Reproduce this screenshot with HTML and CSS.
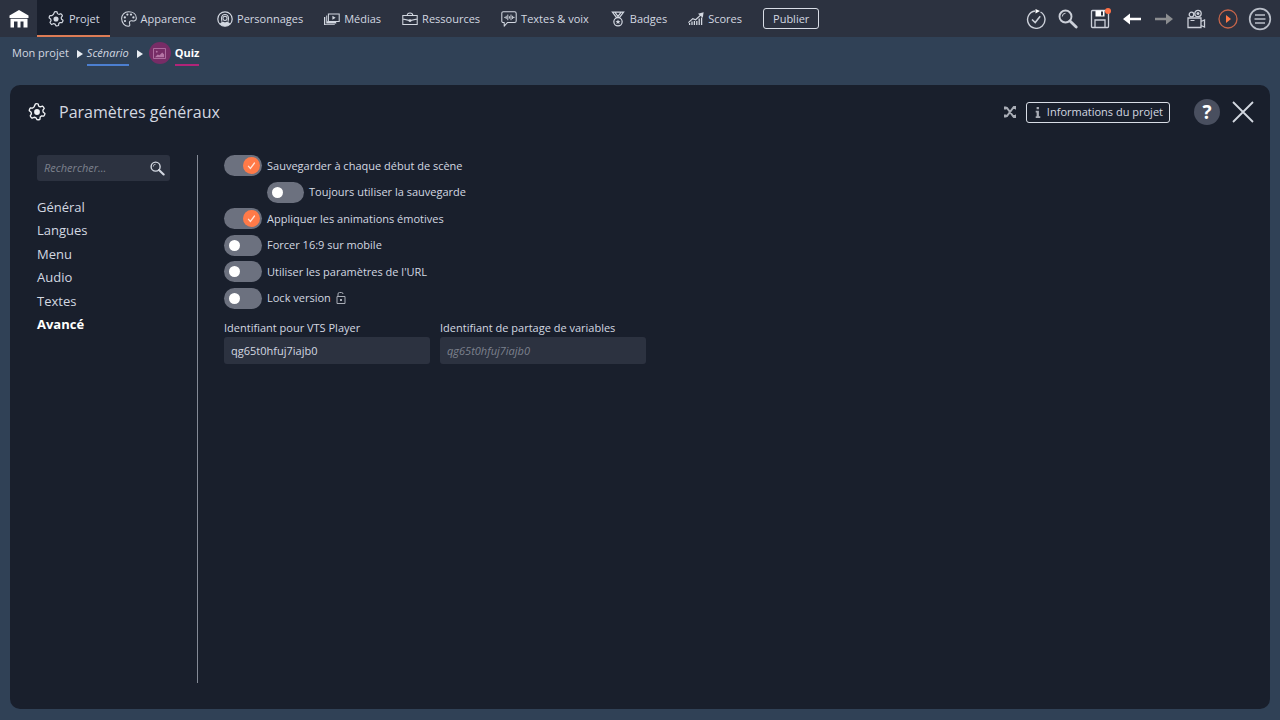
FILE: index.html
```html
<!DOCTYPE html>
<html lang="fr">
<head>
<meta charset="utf-8">
<title>Paramètres généraux</title>
<link rel="stylesheet" href="styles.css">
</head>
<body>
<svg class="defs" aria-hidden="true">
  <symbol id="gear" viewBox="0 0 20 20">
    <path fill="none" stroke="currentColor" stroke-width="1.5" stroke-linejoin="round" d="M8.300 1q1.700-.5 3 .1l.5 2.200q1 .8 2 .9l2.200-.8q1.500 1 2 2.600l-1.400 2q-.1 1.200.4 2.200l1.800 1.400q-.1 1.800-1.300 3l-2.400-.2q-1 .5-1.600 1.400l-.3 2.300q-1.600.8-3.200.4l-1.200-2.100q-1-.6-2.100-.5l-2.200 1q-1.500-1-2-2.600l1.300-2.100q0-1.100-.5-2.100L1.400 8.600q0-1.700 1.200-3l2.400.1q1-.5 1.700-1.400z"/>
    <circle cx="10" cy="10" r="3.200" fill="currentColor"/>
  </symbol>
  <symbol id="lens" viewBox="0 0 20 20">
    <circle cx="7.500" cy="7.500" r="6" fill="none" stroke="currentColor" stroke-width="1.900"/>
    <path d="M4.300 7.500a3.200 3.200 0 0 1 3.200-3.200" fill="none" stroke="currentColor" stroke-width="1"/>
    <path d="M12 12l6.200 6" stroke="currentColor" stroke-width="2.800" stroke-linecap="round"/>
  </symbol>
</svg>
<header class="topbar">
  <a class="home" href="#" aria-label="Accueil"><svg class="icon-lg" viewBox="0 0 20 20"><path fill="#fff" d="M10 1L19.500 6.500V9H.5V6.500zM1.500 9.700h17V18.500h-4V12.500H11.500v6H8.500v-6H5v6H1.500z"/></svg></a>
  <nav class="menu">
    <a class="item active" href="#"><svg class="icon"><use href="#gear"/></svg>Projet</a>
    <a class="item" href="#"><svg class="icon" viewBox="0 0 20 20"><path fill="none" stroke="currentColor" stroke-width="1.300" d="M9.500 1C4 1 .8 5 .8 9.500c0 5.500 4 9.500 8.200 9.500 3.500 0 1.500-3 1.500-4.500s1.500-2.500 3-2.200c2 .4 5.700.5 5.700-3.300C19.200 4 15 1 9.500 1z"/><g fill="currentColor"><circle cx="4.800" cy="8" r="1.400"/><circle cx="8" cy="4.500" r="1.400"/><circle cx="12.500" cy="4.500" r="1.400"/><circle cx="15.500" cy="8" r="1.400"/><circle cx="5" cy="12.500" r="1.400"/></g></svg>Apparence</a>
    <a class="item" href="#"><svg class="icon" viewBox="0 0 20 20"><g fill="none" stroke="currentColor"><circle cx="10" cy="10" r="9" stroke-width="1.500"/><path stroke-width="1.300" d="M6.300 13.500C5 10 5 4.500 10 4.500s5 5.500 3.700 9"/><circle cx="10" cy="9.200" r="2.600" stroke-width="1.300"/></g><path fill="currentColor" d="M3.500 16c1-2 3-2.500 4.500-2.700q2 1.500 4 0c1.500.2 3.500.7 4.500 2.700-3.500 4-9.500 4-13 0z"/></svg>Personnages</a>
    <a class="item" href="#"><svg class="icon" viewBox="0 0 20 20"><path fill="none" stroke="currentColor" stroke-width="1.300" d="M5.500 3.700H19v9.500H5.500z"/><path fill="currentColor" d="M2.800 5.500H4v9h11.500v1.200H2.800zM0 7.500h1.600v9H13.500V17.500H0zM4 12.800h11v2.700H4zM10.500 6l4 2.500-4 2.500z"/></svg>Médias</a>
    <a class="item" href="#"><svg class="icon" viewBox="0 0 20 20"><path fill="none" stroke="currentColor" stroke-width="1.300" d="M1 5.500h18v11.500H1zM6.500 5.500q0-3 3.500-3t3.500 3M1 10l9 2 9-2"/><path fill="currentColor" d="M8.500 10.500h3v3h-3z"/></svg>Ressources</a>
    <a class="item" href="#"><svg class="icon" viewBox="0 0 20 20"><path fill="none" stroke="currentColor" stroke-width="1.300" stroke-linejoin="round" d="M3 1h14q2 0 2 2v9.500q0 2-2 2H8l-4 4.500v-4.500H3q-2 0-2-2V3q0-2 2-2z"/><path stroke="currentColor" stroke-width="1.200" d="M4 8h2M6.500 6v4M8.500 4.500v7M10.500 6.500v3M12.500 4.500v7M14.500 6v4M15 8h2"/></svg>Textes &amp; voix</a>
    <a class="item" href="#"><svg class="icon" viewBox="0 0 20 20"><g fill="none" stroke="currentColor" stroke-width="1.500"><path d="M3 1.500h14l-5 6.500H8zM6 1.500l5 6.500M14 1.500L9 8"/><circle cx="10" cy="13.500" r="5.200"/></g><path fill="currentColor" d="M10 10.500l.9 2 2.200.2-1.700 1.400.6 2.100-2-1.200-2 1.200.6-2.100-1.700-1.400 2.200-.2z"/></svg>Badges</a>
    <a class="item" href="#"><svg class="icon" viewBox="0 0 20 20"><path fill="none" stroke="currentColor" stroke-width="1.500" d="M.5 14.500L6 9.500l3.500 1.500 7-6.500"/><path fill="currentColor" d="M12.500 3.500L19.500 1.500l-1 7z"/><path stroke="currentColor" stroke-width="1.600" d="M2 17.500V15M5 17.500V13M8 17.500V12.500M11 17.500V12.500M14 17.500V9.500M17 17.500V8"/></svg>Scores</a>
  </nav>
  <button class="outline publish" type="button">Publier</button>
  <div class="tools">
    <button type="button" aria-label="Vérifier"><svg class="icon-lg" viewBox="0 0 20 20"><g fill="none" stroke="currentColor"><path stroke-width="1.400" d="M14.500 3A8.700 8.700 0 1 1 9 2"/><path stroke-width="1.600" d="M6 10.500l3.200 3 5-6.200"/></g><path fill="#fff" d="M9.500 0l4.500 2-4.500 2.500z"/></svg></button>
    <button type="button" aria-label="Rechercher"><svg class="icon-lg"><use href="#lens"/></svg></button>
    <button class="save" type="button" aria-label="Enregistrer"><svg class="icon-lg" viewBox="0 0 20 20"><g fill="none" stroke="currentColor" stroke-width="1.300"><path d="M2.500 1.500h14L18.500 4v13.500q0 1-1 1h-15q-1 0-1-1v-15q0-1 1-1zM5 18.500v-7.500h10v7.500"/></g><path fill="#fff" d="M5.500 1.500h9v6h-9z"/><path fill="#2c3240" d="M11 2.500h2v4h-2z"/></svg><span class="dot"></span></button>
    <button class="bright" type="button" aria-label="Annuler"><svg class="icon-lg" viewBox="0 0 20 20"><path fill="currentColor" d="M1 10l7-5.500v4.200H19v2.600H8v4.200z"/></svg></button>
    <button class="dim" type="button" aria-label="Rétablir"><svg class="icon-lg" viewBox="0 0 20 20"><path fill="currentColor" d="M19 10l-7-5.500v4.200H1v2.600h11v4.200z"/></svg></button>
    <button type="button" aria-label="Caméra"><svg class="icon-lg" viewBox="0 0 20 20"><g fill="none" stroke="currentColor" stroke-width="1.300"><circle cx="5.500" cy="5.500" r="2.300"/><circle cx="12" cy="4.500" r="3.200"/><path d="M2 9h13v9.500H2zM15 12.500l3.500-1.500v7L15 16.500"/></g><circle cx="12" cy="4.500" r="1.500" fill="currentColor"/><path fill="currentColor" d="M4.500 11h4v1h-4z"/></svg></button>
    <button class="play" type="button" aria-label="Lire"><svg class="icon-lg" viewBox="0 0 20 20"><circle cx="10" cy="10" r="9" fill="none" stroke="currentColor" stroke-width="1.300"/><path fill="#ff7846" d="M8 6l5 4-5 4z"/></svg></button>
    <button type="button" aria-label="Menu"><svg class="icon-xl" viewBox="0 0 24 24"><circle cx="12" cy="12" r="10.300" fill="none" stroke="currentColor" stroke-width="1.700"/><path stroke="currentColor" stroke-width="1.500" d="M7 8h10M6.500 12h11M7 16h10"/></svg></button>
  </div>
</header>
<nav class="crumbs" aria-label="Fil d'Ariane">
  <a href="#">Mon projet</a>
  <span class="chevron"></span>
  <a class="scenario" href="#">Scénario</a>
  <span class="chevron wide"></span>
  <span class="scene"><svg viewBox="0 0 14 12"><path fill="none" stroke="currentColor" d="M.5.500h13v11H.5z"/><path fill="currentColor" d="M2 10l3-3 2 1 3-3 2 2v3z"/><circle cx="4" cy="4" r="1" fill="currentColor"/></svg></span>
  <a class="quiz" href="#">Quiz</a>
</nav>
<main class="panel">
  <header class="panel-head">
    <svg class="head-icon"><use href="#gear"/></svg>
    <h1>Paramètres généraux</h1>
    <svg class="shuffle" viewBox="0 0 12 12"><g fill="none" stroke="currentColor" stroke-width="2"><path d="M0 2h3l6 8h3M0 10h3l6-8h3"/></g><path fill="currentColor" d="M8.500 0H12v4zM8.500 12H12V8zM0 .5h2.500v3H0zM0 8.500h2.500v3H0z"/></svg>
    <button class="outline info" type="button"><svg viewBox="0 0 6 12"><path fill="currentColor" d="M1.500 0h2.500v2.500H1.500zM.5 4H4v6h1.500v2H.5v-2H1.500V6H.5z"/></svg>Informations du projet</button>
    <button class="help" type="button">?</button>
    <button class="close" type="button" aria-label="Fermer"><svg viewBox="0 0 22 22"><path stroke="currentColor" stroke-width="1.800" d="M1 1l20 20M21 1L1 21"/></svg></button>
  </header>
  <div class="content">
    <aside class="side">
      <div class="search"><input type="text" placeholder="Rechercher..." aria-label="Rechercher"><svg><use href="#lens"/></svg></div>
      <nav class="sections">
        <a href="#">Général</a><a href="#">Langues</a><a href="#">Menu</a><a href="#">Audio</a><a href="#">Textes</a><a class="current" href="#">Avancé</a>
      </nav>
    </aside>
    <form class="settings">
      <div class="switches">
        <label class="switch"><input type="checkbox" checked><span class="track"><svg viewBox="0 0 12 12"><path d="M1.500 6.500l3 3.500 6-8"/></svg></span>Sauvegarder à chaque début de scène</label>
        <label class="switch nested"><input type="checkbox"><span class="track"></span>Toujours utiliser la sauvegarde</label>
        <label class="switch"><input type="checkbox" checked><span class="track"><svg viewBox="0 0 12 12"><path d="M1.500 6.500l3 3.500 6-8"/></svg></span>Appliquer les animations émotives</label>
        <label class="switch"><input type="checkbox"><span class="track"></span>Forcer 16:9 sur mobile</label>
        <label class="switch"><input type="checkbox"><span class="track"></span>Utiliser les paramètres de l'URL</label>
        <label class="switch"><input type="checkbox"><span class="track"></span>Lock version<svg class="lock" viewBox="0 0 10 12"><path fill="none" stroke="currentColor" d="M1 4.500h8v7H1zM2 4.500V2Q2 .5 3.500.5h2Q7 .5 7 2"/><path fill="currentColor" d="M4 7h2v2H4z"/></svg></label>
      </div>
      <div class="fields">
        <div class="field"><label for="player">Identifiant pour VTS Player</label><input id="player" type="text" value="qg65t0hfuj7iajb0"></div>
        <div class="field"><label for="share">Identifiant de partage de variables</label><input id="share" type="text" placeholder="qg65t0hfuj7iajb0"></div>
      </div>
    </form>
  </div>
</main>
</body>
</html>
```
FILE: styles.css
```css
* { box-sizing: border-box; }
body {
  margin: 0;
  min-height: 100vh;
  display: flex;
  flex-direction: column;
  background: #304156;
  color: #d3d8e1;
  font: 11px/16px "Open Sans", "Noto Sans", sans-serif;
}
a { color: inherit; text-decoration: none; }
button { padding: 0; border: 0; background: none; color: inherit; font: inherit; display: flex; align-items: center; justify-content: center; }
svg { display: block; flex: none; }
.defs { position: absolute; width: 0; height: 0; }
.topbar { height: 37px; display: flex; align-items: center; background: #2c3240; }
.home { width: 37px; display: flex; justify-content: center; }
.icon { width: 16px; height: 16px; }
.icon-lg { width: 20px; height: 20px; }
.icon-xl { width: 24px; height: 24px; }
.menu { display: flex; align-self: stretch; }
.item { display: flex; align-items: center; gap: 4px; padding: 0 10px 0 11px; white-space: nowrap; }
.item.active { background: #191f2c; box-shadow: inset 0 -2px #dd7c55; gap: 5px; }
.outline { height: 21px; border: 1px solid #d8dde6; border-radius: 3px; white-space: nowrap; }
.publish { margin-left: 11px; padding: 0 9px; }
.tools { margin-left: auto; padding-right: 4px; display: flex; }
.tools button { width: 32px; height: 32px; position: relative; color: #ccd0d9; }
.tools button:last-child { color: #b9bec8; }
.tools .bright { color: #fff; }
.tools .dim { color: #8b8d90; }
.tools .play { color: #c5654a; }
.dot { position: absolute; top: 5px; right: 5px; width: 6px; height: 6px; border-radius: 50%; background: #ff7045; }
.crumbs { display: flex; align-items: center; height: 32px; padding: 0 12px; }
.chevron { border-left: 6px solid #e8edf3; border-top: 4px solid transparent; border-bottom: 4px solid transparent; margin: 2px 4px 0 8px; }
.scenario { font-style: italic; border-bottom: 2px solid #4c7fd0; padding: 5px 0 3px; }
.chevron.wide { margin-right: 6px; }
.scene { width: 22px; height: 22px; border-radius: 50%; background: #772c66; color: #b575a5; display: flex; align-items: center; justify-content: center; }
.scene svg { width: 13px; height: 11px; }
.quiz { margin-left: 4px; padding: 5px 0 3px; border-bottom: 2px solid #b02478; font-weight: 700; color: #fff; }
.panel { flex: 1; display: flex; flex-direction: column; margin: 16px 10px 11px; padding-bottom: 26px; border-radius: 10px; background: #191f2c; }
.panel-head { height: 54px; display: flex; align-items: center; padding: 0 16px 0 18px; }
.head-icon { width: 18px; height: 18px; color: #f0f2f5; }
h1 { margin: 0 auto 0 13px; font-size: 16px; line-height: 24px; font-weight: 400; }
.shuffle { width: 12px; height: 12px; margin-right: 10px; color: #a9adb6; }
.info { padding: 0 6px 0 8px; gap: 6px; }
.info svg { width: 6px; height: 11px; color: #a9adb6; }
.help { width: 26px; height: 26px; margin: 0 12px 0 24px; border-radius: 50%; background: #494f5f; color: #fff; font-size: 19px; line-height: 24px; font-weight: 700; }
.close svg { width: 22px; height: 22px; }
.content { flex: 1; display: flex; padding: 16px 27px 0; }
.side { width: 161px; padding-right: 27px; border-right: 1px solid #848a96; }
input { font: inherit; color: inherit; }
.search { display: flex; align-items: center; height: 26px; padding: 0 5px 0 7px; border-radius: 3px; background: #2c3240; }
.search input { flex: 1; min-width: 0; padding: 0; border: 0; background: none; outline: 0; }
::placeholder { color: #7c818d; opacity: 1; font-style: italic; }
.search svg { width: 15px; height: 15px; }
.sections { height: 137px; margin-top: 16px; display: flex; flex-direction: column; justify-content: space-between; font-size: 13px; line-height: 20px; }
.current { color: #fff; font-weight: 700; }
.settings { flex: 1; padding-left: 26px; }
.switches { height: 154px; display: flex; flex-direction: column; justify-content: space-between; align-items: flex-start; }
.switch { display: flex; align-items: center; gap: 5px; height: 21px; position: relative; }
.nested { margin-left: 43px; }
.nested .track { width: 37px; }
.switch input { position: absolute; width: 38px; height: 21px; margin: 0; opacity: 0; }
.track { width: 38px; height: 21px; padding: 0 5px; border-radius: 11px; background: #6c717f; display: flex; align-items: center; }
.track::before { content: ""; width: 11px; height: 11px; border-radius: 50%; background: #fff; }
input:checked + .track { padding: 0 2px; justify-content: flex-end; }
input:checked + .track::before { display: none; }
.track svg { width: 17px; height: 17px; padding: 4px; border-radius: 50%; background: #ff7a48; fill: none; stroke: #ffe4d8; stroke-width: 1.700; }
.lock { width: 10px; height: 12px; color: #a9adb6; }
.fields { display: flex; gap: 10px; margin-top: 11px; }
.field { width: 206px; display: flex; flex-direction: column; gap: 1px; }
.field input { height: 27px; padding: 0 7px; border: 0; border-radius: 3px; background: #2c3240; outline: 0; }
```
